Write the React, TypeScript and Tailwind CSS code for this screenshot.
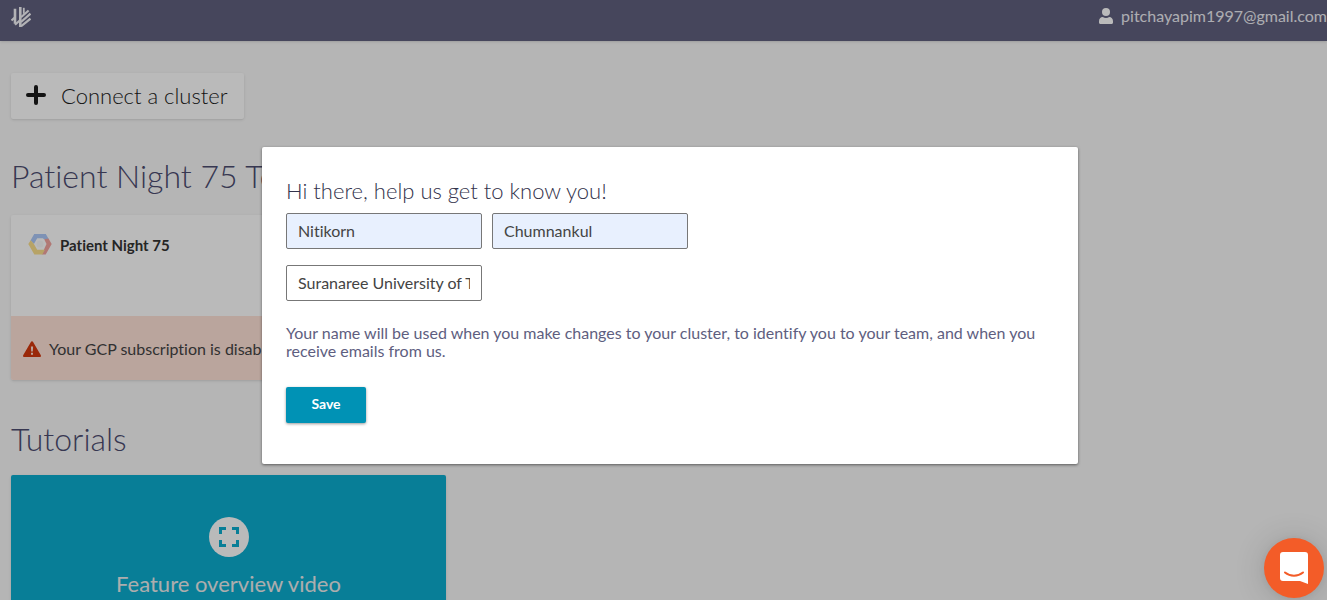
import React from "react";

function WeaveLogo() {
  return (
    <svg viewBox="0 0 20 20" className="size-5" aria-hidden="true" fill="none" stroke="#f4f4f8">
      <path d="M4 1.800v15M9.300 0v20" strokeWidth="2.600" />
      <path d="M12.800 .8v6" strokeWidth="1.800" />
      <path d="M.5 13.500L4 10.200M4 17.800l5-4.600M10 10.300l7.600-6.800M10 15l9.500-8.300M10 19.300l9.500-7.600" strokeWidth="2.200" />
    </svg>
  );
}

function UserIcon() {
  return (
    <svg viewBox="0 0 14 16" className="h-4 w-[14px]" aria-hidden="true" fill="#ffffff">
      <circle cx="7" cy="4" r="4" />
      <path d="M0 14.500v-1.200C0 10.700 1.500 9 3.800 9c1 .6 2 .9 3.200.9S9.200 9.600 10.200 9C12.500 9 14 10.700 14 13.300v1.200c0 .9-.6 1.500-1.500 1.500h-11C.6 16 0 15.400 0 14.500z" />
    </svg>
  );
}

function CloudIcon() {
  return (
    <svg viewBox="0 0 24 22" className="h-[22px] w-6 shrink-0" aria-hidden="true">
      <path d="M2.500 7.500L6.200 1h11.600l3 5.200-4.800.1-1.200-1H9.200L5.900 11z" fill="#adc9f8" />
      <path d="M20.500 5.500L23.700 11l-6 10.500h-4L18.500 11l-2.300-4.700z" fill="#f3a5a0" />
      <path d="M2.700 7.300L.3 11l6 10.500h8l2.600-4.800H9.200L5.900 11z" fill="#fbe08d" />
      <circle cx="12" cy="11" r="3.500" fill="#f8f8f8" />
    </svg>
  );
}

function WarningIcon() {
  return (
    <svg viewBox="0 0 18 16" className="h-4 w-[18px] shrink-0" aria-hidden="true">
      <path d="M9 .3c.5 0 .9.300 1.100.7l7.600 13.100c.6 1 .1 1.900-1 1.900H1.300c-1.100 0-1.600-.9-1-1.900L7.900 1c.2-.4.600-.7 1.100-.7z" fill="#d4380d" />
      <path d="M7.900 5.500h2.200l-.3 5H8.200zM8 11.700h2v2H8z" fill="#ffe2d8" />
    </svg>
  );
}

export default function App() {
  return (
    <div className="relative h-screen overflow-hidden bg-[#f8f8f8] font-['Lato','Open_Sans',sans-serif] text-[#1a1a1a] [font-variant-ligatures:none]">
      <header className="flex h-[41px] items-start justify-between bg-[#60607e] pt-[7px] pl-[11px] shadow">
        <a href="#home" aria-label="Home">
          <WeaveLogo />
        </a>
        <a href="#account" className="flex items-center gap-2 text-base leading-[18px] text-[#eeeef4]">
          <UserIcon />
          pitchayapim1997@gmail.com
        </a>
      </header>

      <main className="px-[11px] pt-8">
        <button className="flex h-[46px] items-center gap-[15px] rounded-xs bg-white pr-4 pb-[2px] pl-[15px] text-[22px] font-light shadow">
          <svg viewBox="0 0 20 20" className="size-5" aria-hidden="true">
            <path d="M10 2v16M2 10h16" stroke="#1a1a1a" strokeWidth="4" strokeLinecap="round" />
          </svg>
          Connect a cluster
        </button>

        <h1 className="mt-9 text-[32px] leading-[42px] font-light text-[#4c4c70]">Patient Night 75 Team</h1>
        <section className="mt-[18px] w-[435px] overflow-hidden rounded-xs bg-white shadow">
          <div className="flex h-[101px] items-start gap-2 px-[17px] pt-[18px]">
            <CloudIcon />
            <h2 className="text-[15px] leading-6 font-bold text-[#333333]">Patient Night 75</h2>
          </div>
          <p className="flex h-16 items-center gap-2 bg-[#ffe2d8] px-3 pt-[2px] text-base text-[#444444]">
            <WarningIcon />
            Your GCP subscription is disabled
          </p>
        </section>

        <h1 className="mt-[38px] text-[32px] leading-[42px] font-light text-[#4c4c70]">Tutorials</h1>
        <a
          href="#video"
          className="mt-[15px] flex h-[200px] w-[435px] flex-col items-center rounded-xs bg-[#0cadd0] pt-[42px] text-[22px] text-[#eeeeee] shadow"
        >
          <svg viewBox="0 0 40 40" className="size-10" aria-hidden="true">
            <circle cx="20" cy="20" r="20" fill="#ffffff" />
            <path d="M11.500 17v-5.500H17M23 11.500h5.500V17M28.500 23v5.500H23M17 28.500h-5.500V23" fill="none" stroke="#0cadd0" strokeWidth="3" />
          </svg>
          <span className="mt-3 leading-[30px]">Feature overview video</span>
        </a>
      </main>

      <div className="absolute inset-0 flex items-start justify-center bg-black/27 pt-[147px] pl-[13px]">
        <div
          role="dialog"
          aria-labelledby="dialog-title"
          className="w-full max-w-[816px] rounded-xs bg-white px-6 pt-8 pb-[41px] text-[#5e5e80] shadow-[0_1px_3px_rgba(0,0,0,0.5)]"
        >
          <form onSubmit={(e) => e.preventDefault()}>
            <h2 id="dialog-title" className="text-[22px] leading-6 font-light text-[#32324b]">
              Hi there, help us get to know you!
            </h2>
            <div className="mt-[10px] flex gap-[10px]">
              <input
                aria-label="First name"
                defaultValue="Nitikorn"
                className="h-9 w-[196px] rounded-xs border border-[#777777] bg-[#e8f0fe] px-[11px] pb-[2px] text-base text-[#444444]"
              />
              <input
                aria-label="Last name"
                defaultValue="Chumnankul"
                className="h-9 w-[196px] rounded-xs border border-[#777777] bg-[#e8f0fe] px-[11px] pb-[2px] text-base text-[#444444]"
              />
            </div>
            <input
              aria-label="Company"
              defaultValue="Suranaree University of Technology"
              className="mt-4 block h-9 w-[196px] rounded-xs border border-[#777777] bg-white px-[11px] pb-[2px] text-base text-[#444444]"
            />
            <p className="mt-[23px] text-base leading-[18px]">
              Your name will be used when you make changes to your cluster, to identify you to your team, and when you
              receive emails from us.
            </p>
            <button
              type="submit"
              className="mt-[27px] block h-9 w-20 rounded-xs bg-[#0092b5] pb-[2px] text-sm font-bold text-white shadow-[0_1px_3px_rgba(0,0,0,0.4)]"
            >
              Save
            </button>
          </form>
        </div>
      </div>

      <button
        aria-label="Open chat"
        className="absolute right-[3px] bottom-[2px] flex size-[60px] items-center justify-center rounded-full bg-[#f35c28] shadow-[0_1px_6px_rgba(0,0,0,0.06),0_2px_32px_rgba(0,0,0,0.16)]"
      >
        <svg viewBox="0 0 28 32" className="h-8 w-7" aria-hidden="true">
          <path d="M3 0h22a3 3 0 0 1 3 3v29l-8-3H3a3 3 0 0 1-3-3V3a3 3 0 0 1 3-3z" fill="#ffffff" />
          <path d="M5 20.500c5.200 4.200 12.800 4.200 18 0" fill="none" stroke="#f35c28" strokeWidth="2" strokeLinecap="round" />
        </svg>
      </button>
    </div>
  );
}
